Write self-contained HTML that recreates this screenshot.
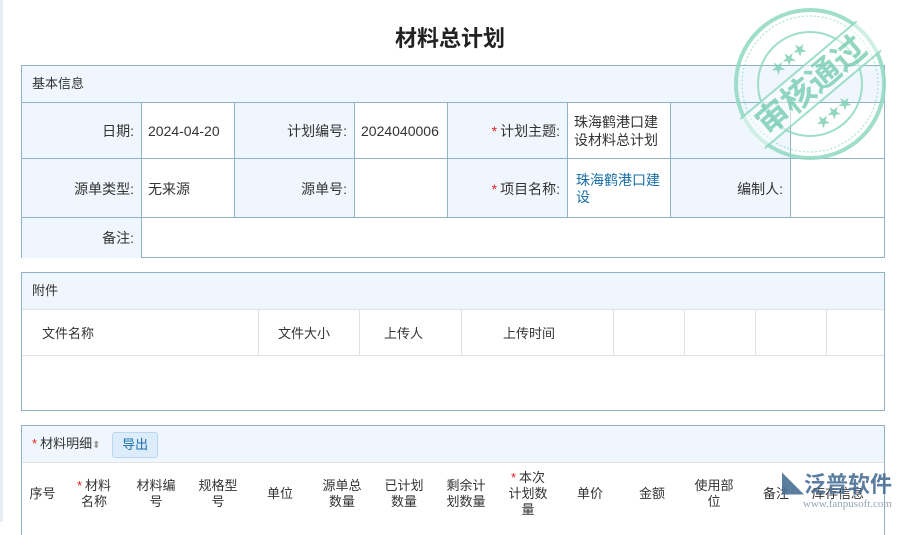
<!DOCTYPE html>
<html><head><meta charset="utf-8"><style>
*{box-sizing:border-box;margin:0;padding:0}
body{width:900px;height:522px;overflow:hidden;background:#fff;font-family:"Liberation Sans","Noto Sans CJK SC",sans-serif;font-size:13px;color:#333;position:relative}
.strip{position:absolute;left:0;top:0;width:3px;height:522px;background:#e8eef2}
.title{position:absolute;top:21px;left:0;width:900px;text-align:center;font-size:22px;font-weight:bold;color:#222}
.box{position:absolute;left:21px;width:864px;border:1px solid #8fb3c4}
.hd{background:#f0f6fd;height:37px;line-height:36px;padding-left:10px;color:#333}
.abs{position:absolute}
.l{position:absolute;background:#8fb3c4}
.g{position:absolute;background:#e2e2e2}
.c{position:absolute;display:flex;align-items:center;font-size:14px}
.lab{justify-content:flex-end;padding-right:8px;background:#f0f6fd}
.r{color:#e02020;margin-right:3px}
a{color:#1a6fa8}
</style></head><body>
<div class="strip"></div>
<div class="title">材料总计划</div>

<div class="box" style="top:65px;height:193px">
<div class="hd" style="border-bottom:1px solid #8fb3c4">基本信息</div>
<div class="c lab" style="left:0;top:37px;width:120px;height:56px">日期:</div>
<div class="c" style="left:126px;top:37px;height:56px">2024-04-20</div>
<div class="c lab" style="left:213px;top:37px;width:120px;height:56px">计划编号:</div>
<div class="c" style="left:339px;top:37px;height:56px">2024040006</div>
<div class="c lab" style="left:426px;top:37px;width:120px;height:56px"><span class="r">*</span>计划主题:</div>
<div class="c" style="left:552px;top:37px;width:92px;height:56px;line-height:18px">珠海鹤港口建设材料总计划</div>
<div class="c lab" style="left:649px;top:37px;width:120px;height:56px"></div>
<div class="c lab" style="left:0;top:93px;width:120px;height:59px">源单类型:</div>
<div class="c" style="left:126px;top:93px;height:59px">无来源</div>
<div class="c lab" style="left:213px;top:93px;width:120px;height:59px">源单号:</div>
<div class="c lab" style="left:426px;top:93px;width:120px;height:59px"><span class="r">*</span>项目名称:</div>
<div class="c" style="left:554px;top:93px;width:88px;height:59px;line-height:17px"><a>珠海鹤港口建设</a></div>
<div class="c lab" style="left:649px;top:93px;width:120px;height:59px">编制人:</div>
<div class="c lab" style="left:0;top:152px;width:120px;height:40px">备注:</div>
<div class="l" style="left:0;right:0;top:92px;height:1px"></div>
<div class="l" style="left:0;right:0;top:151px;height:1px"></div>
<div class="l" style="left:119px;top:37px;width:1px;height:155px"></div>
<div class="l" style="left:212px;top:37px;width:1px;height:115px"></div>
<div class="l" style="left:332px;top:37px;width:1px;height:115px"></div>
<div class="l" style="left:425px;top:37px;width:1px;height:115px"></div>
<div class="l" style="left:545px;top:37px;width:1px;height:115px"></div>
<div class="l" style="left:648px;top:37px;width:1px;height:115px"></div>
<div class="l" style="left:768px;top:37px;width:1px;height:115px"></div>
</div>

<div class="box" style="top:272px;height:139px">
<div class="hd" style="border-bottom:1px solid #e2e2e2">附件</div>
<div class="abs" style="left:20px;top:50px">文件名称</div>
<div class="abs" style="left:256px;top:50px">文件大小</div>
<div class="abs" style="left:362px;top:50px">上传人</div>
<div class="abs" style="left:481px;top:50px">上传时间</div>
<div class="g" style="left:0;right:0;top:82px;height:1px"></div>
<div class="g" style="left:236px;top:37px;width:1px;height:45px"></div>
<div class="g" style="left:337px;top:37px;width:1px;height:45px"></div>
<div class="g" style="left:439px;top:37px;width:1px;height:45px"></div>
<div class="g" style="left:591px;top:37px;width:1px;height:45px"></div>
<div class="g" style="left:662px;top:37px;width:1px;height:45px"></div>
<div class="g" style="left:733px;top:37px;width:1px;height:45px"></div>
<div class="g" style="left:804px;top:37px;width:1px;height:45px"></div>
</div>

<div class="box" style="top:425px;height:110px;border-bottom:none">
<div class="hd" style="border-bottom:1px solid #e2e2e2;padding-left:10px"><span class="r">*</span>材料明细<span style="color:#999;font-size:10px">⬍</span>
<span style="display:inline-block;margin-left:8px;background:#dcecfa;border:1px solid #b9d7f0;color:#1a6fa8;border-radius:3px;height:26px;line-height:24px;padding:0 9px;vertical-align:middle">导出</span></div>
<div style="position:absolute;top:38px;left:0;display:flex;width:862px;text-align:center;line-height:16px">
<div style="width:41px;padding-top:22px">序号</div>
<div style="width:62px;padding-top:14px"><span class="r">*</span>材料<br>名称</div>
<div style="width:62px;padding-top:14px">材料编<br>号</div>
<div style="width:62px;padding-top:14px">规格型<br>号</div>
<div style="width:62px;padding-top:22px">单位</div>
<div style="width:62px;padding-top:14px">源单总<br>数量</div>
<div style="width:62px;padding-top:14px">已计划<br>数量</div>
<div style="width:62px;padding-top:14px">剩余计<br>划数量</div>
<div style="width:62px;padding-top:6px"><span class="r">*</span>本次<br>计划数<br>量</div>
<div style="width:62px;padding-top:22px">单价</div>
<div style="width:62px;padding-top:22px">金额</div>
<div style="width:62px;padding-top:14px">使用部<br>位</div>
<div style="width:62px;padding-top:22px">备注</div>
<div style="width:62px;padding-top:22px">库存信息</div>
</div>
</div>

<svg class="abs" style="left:730px;top:6px" width="170" height="160" viewBox="0 0 170 160">
<g fill="none" stroke="#8fd9c2" opacity="0.85">
<circle cx="80" cy="78" r="74" stroke-width="4"/>
<circle cx="80" cy="78" r="68" stroke-width="1" stroke-dasharray="2 2"/>
<circle cx="80" cy="78" r="52" stroke-width="2"/>
</g>
<g transform="rotate(-40 80 78)" opacity="0.85">
<rect x="4" y="60" width="152" height="38" fill="#fff" opacity="0.6"/>
<line x1="4" y1="60" x2="156" y2="60" stroke="#8fd9c2" stroke-width="2"/>
<line x1="4" y1="98" x2="156" y2="98" stroke="#8fd9c2" stroke-width="2"/>
<text x="80" y="91" text-anchor="middle" font-size="33" font-weight="bold" fill="#7fd0b6" font-family="Noto Sans CJK SC,sans-serif">审核通过</text>
<text x="80" y="50" text-anchor="middle" font-size="14" fill="#7fd0b6">★★★</text>
<text x="80" y="120" text-anchor="middle" font-size="14" fill="#7fd0b6">★★★</text>
</g>
</svg>

<div class="abs" style="left:782px;top:472px;width:118px;color:#5a7da0;opacity:0.9">
<div style="font-size:22px;font-weight:bold;line-height:26px;color:#4a6f95">◣泛普软件</div>
<div style="font-size:11px;font-family:'Liberation Serif',serif;color:#8a9bb0;text-align:right;padding-right:8px">www.fanpusoft.com</div>
</div>
</body></html>
